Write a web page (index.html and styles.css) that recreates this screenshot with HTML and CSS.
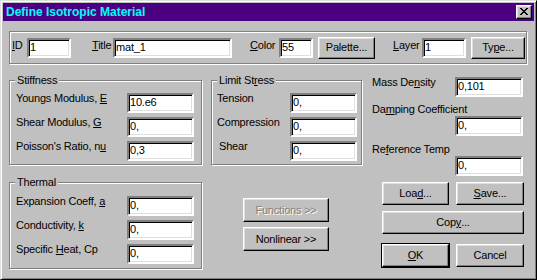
FILE: index.html
```html
<!DOCTYPE html>
<html>
<head>
<meta charset="utf-8">
<title>Define Isotropic Material</title>
<link rel="stylesheet" href="styles.css">
</head>
<body>
<div class="window">
  <div class="titlebar">
    <span class="title">Define Isotropic Material</span>
    <div class="close">
      <svg width="8" height="7" viewBox="0 0 8 7" shape-rendering="crispEdges"><path d="M0 0h2v1H0z M6 0h2v1H6z M1 1h2v1H1z M5 1h2v1H5z M2 2h4v1H2z M3 3h2v1H3z M2 4h4v1H2z M1 5h2v1H1z M5 5h2v1H5z M0 6h2v1H0z M6 6h2v1H6z" fill="#000"/></svg>
    </div>
  </div>
  <div class="content">
    <div class="group top">
      <span class="lbl tl l-id"><u>I</u>D</span>
      <span class="field f-id">1</span>
      <span class="lbl tl l-title"><u>T</u>itle</span>
      <span class="field f-title">mat_1</span>
      <span class="lbl tl l-color"><u>C</u>olor</span>
      <span class="field f-color">55</span>
      <div class="btn b-palette">Palette...</div>
      <span class="lbl tl l-layer"><u>L</u>ayer</span>
      <span class="field f-layer">1</span>
      <div class="btn b-type">Ty<u>p</u>e...</div>
    </div>
    <div class="main">
      <div class="col col1">
        <div class="group box-stiff">
          <div class="legend">Stiffness</div>
          <div class="rows rows-left">
            <span class="lbl">Youngs Modulus, <u>E</u></span><span class="field">10.e6</span>
            <span class="lbl">Shear Modulus, <u>G</u></span><span class="field">0,</span>
            <span class="lbl">Poisson's Ratio, n<u>u</u></span><span class="field">0,3</span>
          </div>
        </div>
        <div class="group box-thermal">
          <div class="legend">Thermal</div>
          <div class="rows rows-left rows-thermal">
            <span class="lbl">Expansion Coeff, <u>a</u></span><span class="field">0,</span>
            <span class="lbl">Conductivity, <u>k</u></span><span class="field">0,</span>
            <span class="lbl">Specific <u>H</u>eat, Cp</span><span class="field">0,</span>
          </div>
        </div>
      </div>
      <div class="col col2">
        <div class="group box-limit">
          <div class="legend">Limit St<u>r</u>ess</div>
          <div class="rows rows-mid">
            <span class="lbl">Tension</span><span class="field">0,</span>
            <span class="lbl">Compression</span><span class="field">0,</span>
            <span class="lbl indent">Shear</span><span class="field">0,</span>
          </div>
        </div>
        <div class="funcs">
          <div class="btn disabled">Functions &gt;&gt;</div>
          <div class="btn">Nonlinear &gt;&gt;</div>
        </div>
      </div>
      <div class="col col3">
        <div class="prop-row">
          <span class="lbl">Mass De<u>n</u>sity</span>
          <span class="field f-prop">0,101</span>
        </div>
        <span class="lbl l-damp">Da<u>m</u>ping Coefficient</span>
        <span class="field f-prop">0,</span>
        <span class="lbl l-ref">Re<u>f</u>erence Temp</span>
        <span class="field f-prop f-ref">0,</span>
        <div class="btn-grid">
          <div class="btn">Loa<u>d</u>...</div>
          <div class="btn"><u>S</u>ave...</div>
          <div class="btn span2">Cop<u>y</u>...</div>
          <div class="btn default"><u>O</u>K</div>
          <div class="btn">Cancel</div>
        </div>
      </div>
    </div>
  </div>
</div>
</body>
</html>
```
FILE: styles.css
```css
* { box-sizing: border-box; }
html, body { margin: 0; padding: 0; }
body {
  width: 537px;
  height: 280px;
  overflow: hidden;
  background: #c0c0c0;
  font-family: "Liberation Sans", Arial, sans-serif;
  font-size: 11px;
  letter-spacing: -0.2px;
  color: #000;
}
u { text-decoration: underline; text-underline-offset: 1px; }

.window {
  width: 537px;
  height: 280px;
  background: #c0c0c0;
  border: 1px solid;
  border-color: #dfdfdf #000 #000 #dfdfdf;
  box-shadow: inset 1px 1px #fff, inset -1px -1px #808080;
  padding: 2px;
  display: flex;
  flex-direction: column;
}

.titlebar {
  height: 18px;
  background: #4b0082;
  display: flex;
  align-items: center;
  padding-left: 3px;
  flex: none;
}
.title {
  color: #00ffff;
  font-weight: bold;
  font-size: 12px;
  letter-spacing: 0;
  line-height: 18px;
}
.close {
  margin-left: auto;
  margin-right: 2px;
  width: 16px;
  height: 14px;
  background: #c0c0c0;
  border: 1px solid;
  border-color: #fff #000 #000 #fff;
  box-shadow: inset -1px -1px #808080, inset 1px 1px #dfdfdf;
  display: flex;
  align-items: center;
  justify-content: center;
  padding-bottom: 1px;
}
.close svg { display: block; }

.content {
  padding: 10px 7px 0 6px;
}

.group {
  border: 1px solid #808080;
  box-shadow: inset 1px 1px #fff, 1px 1px #fff;
}

.lbl { line-height: 13px; white-space: nowrap; }

.field {
  display: block;
  height: 20px;
  background: #fff;
  border: 2px solid;
  border-color: #808080 #fff #fff #808080;
  box-shadow: inset 1px 1px #000, inset -1px -1px #dfdfdf;
  padding: 0 2px 0 1px;
  line-height: 14px;
  white-space: nowrap;
  overflow: hidden;
}

.btn {
  display: flex;
  align-items: center;
  justify-content: center;
  height: 23px;
  background: #c0c0c0;
  border: 1px solid;
  border-color: #fff #000 #000 #fff;
  box-shadow: inset -1px -1px #808080, inset 1px 1px #dfdfdf;
  white-space: nowrap;
  line-height: 13px;
}
.btn.disabled {
  color: #808080;
  text-shadow: 1px 1px #fff;
}
.btn.default {
  outline: 1px solid #000;
}

/* top row */
.top {
  height: 33px;
  display: flex;
  align-items: center;
  padding-left: 2px;
}
.top .tl { margin-bottom: 4px; }
.l-id { width: 15px; }
.f-id { width: 44px; }
.l-title { margin-left: 21px; width: 21px; }
.f-title { width: 119px; }
.l-color { margin-left: 18px; width: 29px; }
.f-color { width: 34px; }
.b-palette { margin-left: 5px; width: 57px; height: 22px; }
.l-layer { margin-left: 18px; width: 29px; }
.f-layer { width: 44px; }
.b-type { margin-left: 5px; width: 54px; height: 22px; }

/* main area */
.main {
  display: flex;
  align-items: flex-start;
}
.col { display: flex; flex-direction: column; }
.col1 { width: 193px; }
.col2 { width: 151px; margin-left: 9px; }
.col3 { flex: 1; padding: 13px 0 0 10px; }

.box-stiff { margin-top: 16px; height: 85px; }
.box-thermal { margin-top: 17px; height: 87px; }
.box-limit { margin-top: 16px; height: 85px; }

.legend {
  width: fit-content;
  margin: -7px 0 0 5px;
  padding: 0 2px;
  background: #c0c0c0;
  line-height: 13px;
  white-space: nowrap;
}

.rows {
  display: grid;
  grid-template-columns: 1fr 67px;
  row-gap: 4px;
  margin-top: 6px;
}
.rows .lbl { margin-top: -1px; }
.rows-left { padding: 0 7px 0 6px; }
.rows-thermal { margin-top: 7px; }
.rows-mid { padding: 0 4px 0 5px; }
.indent { padding-left: 2px; }

.funcs {
  margin: 33px 0 0 32px;
  display: flex;
  flex-direction: column;
  gap: 5px;
}
.funcs .btn { width: 86px; height: 24px; }

.prop-row {
  display: flex;
  align-items: flex-start;
  justify-content: space-between;
  margin-right: 4px;
}
.prop-row .lbl { margin-top: -1px; }
.f-prop { width: 68px; align-self: flex-end; margin-right: 4px; }
.prop-row .f-prop { margin-right: 0; }
.l-damp { margin-top: 6px; }
.l-ref { margin-top: 7px; }
.f-ref { margin-top: 0; }

.btn-grid {
  align-self: flex-end;
  margin: 6px 3px 0 0;
  display: grid;
  grid-template-columns: 67px 68px;
  grid-template-rows: 23px 23px 23px;
  column-gap: 7px;
  row-gap: 6px;
}
.btn-grid .btn { height: 23px; }
.btn-grid .span2 { grid-column: 1 / span 2; }
.btn-grid .default,
.btn-grid .default + .btn { margin-top: 4px; }
```
